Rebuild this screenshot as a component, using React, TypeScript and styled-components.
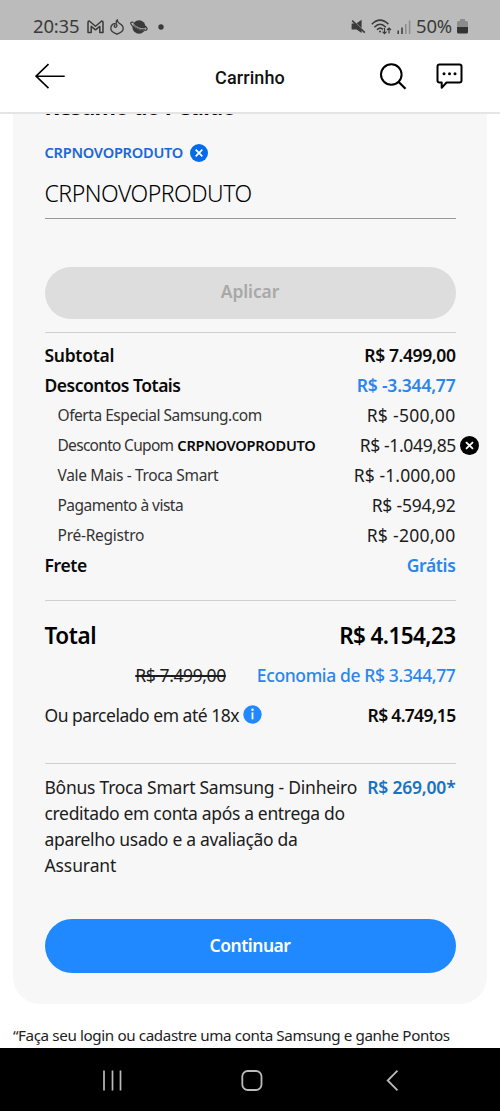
import React from 'react';
import styled, { createGlobalStyle } from 'styled-components';

const GlobalStyle = createGlobalStyle`
  *, *::before, *::after { box-sizing: border-box; }
  body { margin: 0; background: #fff; }
  svg { display: block; flex: none; }
`;

const Screen = styled.div`
  width: 500px;
  height: 1111px;
  display: flex;
  flex-direction: column;
  overflow: hidden;
  background: #fff;
  color: #111;
  font-family: 'Noto Sans', sans-serif;
`;

const StatusBar = styled.div`
  flex: none;
  height: 40px;
  display: flex;
  align-items: flex-start;
  justify-content: space-between;
  padding: 18px 32px 0 33px;
  background: #bbb;
  color: #3a3a3a;
`;

const StatusGroup = styled.div<{ $gap: number }>`
  display: flex;
  align-items: center;
  gap: ${(p) => p.$gap}px;
  height: 17px;
`;

const StatusText = styled.span<{ $width: number }>`
  width: ${(p) => p.$width}px;
  padding-bottom: 2px;
  font-size: 18.5px;
  line-height: 17px;
  letter-spacing: -0.2px;
  white-space: nowrap;
`;

const Header = styled.header`
  flex: none;
  height: 74px;
  display: grid;
  grid-template-columns: 1fr auto 1fr;
  align-items: center;
  padding: 0 37px 0 35px;
  border-bottom: 2px solid #e5e5e5;
`;

const Title = styled.h1`
  margin: 4px 0 0 2px;
  font: 500 18px/24px Roboto, sans-serif;
  letter-spacing: 0.1px;
  color: #111;
`;

const Actions = styled.div`
  display: flex;
  justify-content: flex-end;
  align-items: center;
  gap: 29px;
`;

const Main = styled.main`
  flex: none;
  height: 934px;
  padding: 0 13px;
  overflow: hidden;
`;

const Card = styled.section`
  display: flow-root;
  height: 890px;
  padding: 0 31.5px;
  border-radius: 0 0 27px 27px;
  background: #f7f7f7;
`;

const Heading = styled.h2`
  margin: -23px 0 0;
  height: 30px;
  font-size: 22px;
  line-height: 30px;
  font-weight: 700;
  letter-spacing: -0.7px;
  color: #000;
`;

const CouponTag = styled.div`
  display: flex;
  align-items: center;
  gap: 7px;
  height: 22px;
  margin-top: 21px;
  font-size: 14.6px;
  line-height: 22px;
  font-weight: 600;
  letter-spacing: -0.25px;
  color: #1a68d6;
`;

const CouponCode = styled.span`
  padding-bottom: 2px;
`;

const CouponField = styled.div`
  height: 55px;
  border-bottom: 1px solid #999;
  font-size: 23px;
  line-height: 58px;
  font-weight: 300;
  letter-spacing: -0.5px;
  color: #000;
`;

const Button = styled.button<{ $primary?: boolean }>`
  display: block;
  width: 100%;
  height: ${(p) => (p.$primary ? 54 : 52)}px;
  margin-top: ${(p) => (p.$primary ? 40 : 48)}px;
  padding: 0 0 ${(p) => (p.$primary ? 2 : 4)}px;
  border: 0;
  border-radius: 27px;
  background: ${(p) => (p.$primary ? '#2189ff' : '#ddd')};
  color: ${(p) => (p.$primary ? '#fff' : '#a8a8a8')};
  font-family: inherit;
  font-size: 17.5px;
  font-weight: 600;
  letter-spacing: ${(p) => (p.$primary ? -0.5 : -0.1)}px;
`;

const Divider = styled.hr<{ $top: number; $bottom: number }>`
  height: 1px;
  margin: ${(p) => p.$top}px 0 ${(p) => p.$bottom}px;
  border: 0;
  background: #d0d0d0;
`;

const Row = styled.div<{ $height?: number; $indent?: boolean }>`
  display: flex;
  align-items: center;
  justify-content: space-between;
  height: ${(p) => p.$height ?? 30}px;
  padding-left: ${(p) => (p.$indent ? 13 : 0)}px;
`;

type TextProps = { $size?: number; $weight?: number; $track?: number; $tone?: string };

const Text = styled.span<TextProps>`
  font-size: ${(p) => p.$size ?? 17.5}px;
  line-height: 26px;
  font-weight: ${(p) => p.$weight ?? 400};
  letter-spacing: ${(p) => p.$track ?? 0}px;
  color: ${(p) => p.$tone ?? '#1c1c1c'};
  white-space: nowrap;
`;

const OldPrice = styled(Text)`
  text-decoration: line-through;
  text-decoration-thickness: 1.5px;
`;

const Savings = styled.div`
  display: flex;
  align-items: center;
  justify-content: flex-end;
  gap: 31px;
  height: 38px;
`;

const Inline = styled.div`
  display: flex;
  align-items: center;
  gap: 4px;
`;

const RemovableAmount = styled(Inline)`
  margin-right: -23.5px;
`;

const Bonus = styled.div`
  display: flex;
  align-items: flex-start;
  justify-content: space-between;
  height: 105px;
`;

const BonusText = styled.div`
  display: flex;
  flex-direction: column;
`;

const Footnote = styled.p`
  margin: 18px 0 0;
  font-size: 15.2px;
  line-height: 26px;
  letter-spacing: -0.38px;
  color: #222;
  white-space: nowrap;
`;

const NavBar = styled.nav`
  flex: none;
  height: 63px;
  display: flex;
  align-items: center;
  padding: 2px 0 0 102px;
  background: #000;
`;

const NavButton = styled.span<{ $before?: number }>`
  margin-left: ${(p) => p.$before ?? 0}px;
`;

const Bold = '#0a0a0a';
const Blue = '#2b86ea';

const CloseDot = ({ size, fill }: { size: number; fill: string }) => (
  <svg width={size} height={size} viewBox="0 0 18 18">
    <circle cx="9" cy="9" r="9" fill={fill} />
    <path d="M5.7 5.7l6.6 6.6M12.3 5.7l-6.6 6.6" stroke="#fff" strokeWidth="1.7" />
  </svg>
);

const discounts: { label: string; track: number; amount: string; amountTrack: number; coupon?: string }[] = [
  { label: 'Oferta Especial Samsung.com', track: -0.46, amount: 'R$ -500,00', amountTrack: 0.3 },
  { label: 'Desconto Cupom', track: -0.7, amount: 'R$ -1.049,85', amountTrack: -0.35, coupon: 'CRPNOVOPRODUTO' },
  { label: 'Vale Mais - Troca Smart', track: -0.35, amount: 'R$ -1.000,00', amountTrack: 0.1 },
  { label: 'Pagamento à vista', track: -0.52, amount: 'R$ -594,92', amountTrack: -0.2 },
  { label: 'Pré-Registro', track: -0.25, amount: 'R$ -200,00', amountTrack: 0.3 },
];

const bonusLines: [string, number][] = [
  ['Bônus Troca Smart Samsung - Dinheiro', -0.25],
  ['creditado em conta após a entrega do', -0.34],
  ['aparelho usado e a avaliação da', -0.31],
  ['Assurant', -0.1],
];

export default function App() {
  return (
    <Screen>
      <GlobalStyle />
      <StatusBar>
        <StatusGroup $gap={6}>
          <StatusText $width={48}>20:35</StatusText>
          <svg width="17" height="14" viewBox="0 0 17 14" fill="none" stroke="#3a3a3a" strokeWidth="1.5" strokeLinejoin="round">
            <path d="M1 12.6V2.2Q1 1 2.3 1L8.5 6.2 14.7 1Q16 1 16 2.2v10.4h-3.2V6.4L8.5 9.8 4.2 6.4v6.2z" />
          </svg>
          <svg width="14" height="16" viewBox="0 0 14 16" fill="none" stroke="#3a3a3a" strokeWidth="1.3" strokeLinecap="round" strokeLinejoin="round">
            <path d="M7.4.8Q5.8 2 6.4 3.8M7.4.8Q7.2 3 9.4 4.4 13.2 6.4 13.2 9.4C13.2 13 9 14.2 7 15.3 5 14.2.8 13 .8 9.4.8 6.4 3 4.4 5 4.6 7.4 4.8 7.6 8 5.4 8.3 4 8.3 3.8 6.6 4.9 6.2" />
          </svg>
          <svg width="18" height="14" viewBox="0 0 18 14">
            <ellipse cx="9" cy="7" rx="6.6" ry="6.8" fill="#3a3a3a" />
            <path d="M2.8 5C4.5 8 10.5 11 15 10.6" fill="none" stroke="#bbb" strokeWidth="1" />
            <path d="M3.5 2.3C-.4 1.2 0 4.3 3.6 7.1c4.2 2.9 9.6 4.3 12.4 3.1 1.8-.8 1.2-2.6-1-4.1" fill="none" stroke="#3a3a3a" strokeWidth="1.2" />
            <path d="M3.2 3.8C5.4 7 11 9.6 15.4 8.6" fill="none" stroke="#bbb" strokeWidth=".9" />
          </svg>
          <svg width="18" height="6" viewBox="0 0 18 6">
            <circle cx="7" cy="3" r="2.7" fill="#3a3a3a" />
          </svg>
        </StatusGroup>
        <StatusGroup $gap={5}>
          <svg width="15" height="15" viewBox="0 0 15 15" fill="#3a3a3a">
            <path d="M.6 4.6h3.4l6.6 6.3V14L5.6 10.4H.6zM5.6 4.2L10.6 .8v8.2z" />
            <path d="M1.2 1.6L13.8 13.6" stroke="#3a3a3a" strokeWidth="1.5" />
          </svg>
          <svg width="21" height="16" viewBox="0 0 21 16" fill="none" stroke="#3a3a3a" strokeWidth="1.6">
            <path d="M.8 5.2Q9 -2.8 17.4 5.2M3.4 8.2Q9 2.4 14.8 8.2M6 10.8Q9 7.6 12 10.4" />
            <circle cx="9" cy="12.6" r="1" fill="#3a3a3a" stroke="none" />
            <path d="M13.5 9v5.4M11.5 12.6l2 2 2-2M18 14.6V9.2M16 11l2-2 2 2" strokeWidth="1.2" />
          </svg>
          <svg width="14" height="14" viewBox="0 0 14 14">
            <path d="M1.2 10.5V14M5 7.5V14" stroke="#3a3a3a" strokeWidth="1.5" />
            <path d="M8.8 4V14M12.6 .5V14" stroke="#8c8c8c" strokeWidth="1.5" />
          </svg>
          <Inline>
            <StatusText $width={37}>50%</StatusText>
            <svg width="11" height="15" viewBox="0 0 11 15">
              <path d="M3 0h5v2h1.5Q11 2 11 3.5V8H0V3.5Q0 2 1.5 2H3z" fill="#8c8c8c" />
              <path d="M0 8h11v5q0 1.6-1.6 1.6H1.6Q0 14.6 0 13z" fill="#333" />
            </svg>
          </Inline>
        </StatusGroup>
      </StatusBar>

      <Header>
        <svg width="32" height="26" viewBox="0 0 32 26" fill="none" stroke="#000" strokeWidth="1.6">
          <path d="M13.5 1.2L1 13.2 13.5 25.2M1 13.2H29.7" />
        </svg>
        <Title>Carrinho</Title>
        <Actions>
          <svg width="27" height="27" viewBox="0 0 27 27" fill="none" stroke="#000" strokeWidth="2">
            <circle cx="11.3" cy="11.5" r="10.3" />
            <path d="M18.5 18.7L25.5 25.7" strokeWidth="2.2" />
          </svg>
          <svg width="27" height="27" viewBox="0 0 27 27" fill="none" stroke="#000" strokeWidth="2" strokeLinejoin="round">
            <path d="M3.5 1.5H23.5Q25.5 1.5 25.5 3.5V17.5Q25.5 19.5 23.5 19.5H10.5L5.7 24.8V19.5H3.5Q1.5 19.5 1.5 17.5V3.5Q1.5 1.5 3.5 1.5Z" />
            <g fill="#000" stroke="none">
              <circle cx="8" cy="10.7" r="1.5" />
              <circle cx="13.5" cy="10.7" r="1.5" />
              <circle cx="19" cy="10.7" r="1.5" />
            </g>
          </svg>
        </Actions>
      </Header>

      <Main>
        <Card>
          <Heading>Resumo do Pedido</Heading>
          <CouponTag>
            <CouponCode>CRPNOVOPRODUTO</CouponCode>
            <CloseDot size={18} fill="#056bea" />
          </CouponTag>
          <CouponField>CRPNOVOPRODUTO</CouponField>
          <Button disabled>Aplicar</Button>
          <Divider $top={13} $bottom={7} />

          <Row>
            <Text $weight={600} $track={-0.3} $tone={Bold}>Subtotal</Text>
            <Text $weight={600} $track={-0.4} $tone={Bold}>R$ 7.499,00</Text>
          </Row>
          <Row>
            <Text $weight={600} $track={-0.5} $tone={Bold}>Descontos Totais</Text>
            <Text $weight={600} $track={-0.2} $tone={Blue}>R$ -3.344,77</Text>
          </Row>
          {discounts.map((d) => (
            <Row key={d.label} $indent>
              <Inline>
                <Text $size={15.5} $track={d.track} $tone="#333">{d.label}</Text>
                {d.coupon && <Text $size={14.6} $weight={600} $track={-0.28} $tone={Bold}>{d.coupon}</Text>}
              </Inline>
              {d.coupon ? (
                <RemovableAmount>
                  <Text $track={d.amountTrack}>{d.amount}</Text>
                  <CloseDot size={19} fill="#000" />
                </RemovableAmount>
              ) : (
                <Text $track={d.amountTrack}>{d.amount}</Text>
              )}
            </Row>
          ))}
          <Row>
            <Text $weight={600} $track={-0.35} $tone={Bold}>Frete</Text>
            <Text $weight={600} $track={-0.35} $tone={Blue}>Grátis</Text>
          </Row>

          <Divider $top={20} $bottom={15} />

          <Row $height={40}>
            <Text $size={22.5} $weight={600} $track={-0.4} $tone="#000">Total</Text>
            <Text $size={22.5} $weight={600} $track={-0.6} $tone="#000">R$ 4.154,23</Text>
          </Row>
          <Savings>
            <OldPrice $track={-0.4}>R$ 7.499,00</OldPrice>
            <Text $weight={500} $track={-0.37} $tone={Blue}>Economia de R$ 3.344,77</Text>
          </Savings>
          <Row $height={41}>
            <Inline>
              <Text $track={-0.48}>Ou parcelado em até 18x</Text>
              <svg width="19" height="19" viewBox="0 0 19 19">
                <circle cx="9.5" cy="9.5" r="9.2" fill="#2189ff" />
                <path d="M9.5 7.4V14.3" stroke="#fff" strokeWidth="1.8" />
                <circle cx="9.5" cy="4.8" r="1.2" fill="#fff" />
              </svg>
            </Inline>
            <Text $weight={600} $track={-0.7} $tone={Bold}>R$ 4.749,15</Text>
          </Row>

          <Divider $top={28} $bottom={10} />

          <Bonus>
            <BonusText>
              {bonusLines.map(([line, track]) => (
                <Text key={line} $track={track}>{line}</Text>
              ))}
            </BonusText>
            <Text $weight={600} $track={-0.2} $tone="#1a73c0">R$ 269,00*</Text>
          </Bonus>

          <Button $primary>Continuar</Button>
        </Card>
        <Footnote>“Faça seu login ou cadastre uma conta Samsung e ganhe Pontos</Footnote>
      </Main>

      <NavBar>
        <NavButton>
          <svg width="21" height="21" viewBox="0 0 21 21" stroke="#bbb" strokeWidth="1.7">
            <path d="M2 .5V20.5M10.5 .5V20.5M18.5 .5V20.5" />
          </svg>
        </NavButton>
        <NavButton $before={118}>
          <svg width="22" height="21" viewBox="0 0 22 21" fill="none" stroke="#bbb" strokeWidth="1.8">
            <rect x="1.3" y="1" width="19.2" height="19" rx="5.5" />
          </svg>
        </NavButton>
        <NavButton $before={123}>
          <svg width="13" height="21" viewBox="0 0 13 21" fill="none" stroke="#bbb" strokeWidth="1.8">
            <path d="M11.5 .7L1.7 10.5 11.5 20.3" />
          </svg>
        </NavButton>
      </NavBar>
    </Screen>
  );
}
